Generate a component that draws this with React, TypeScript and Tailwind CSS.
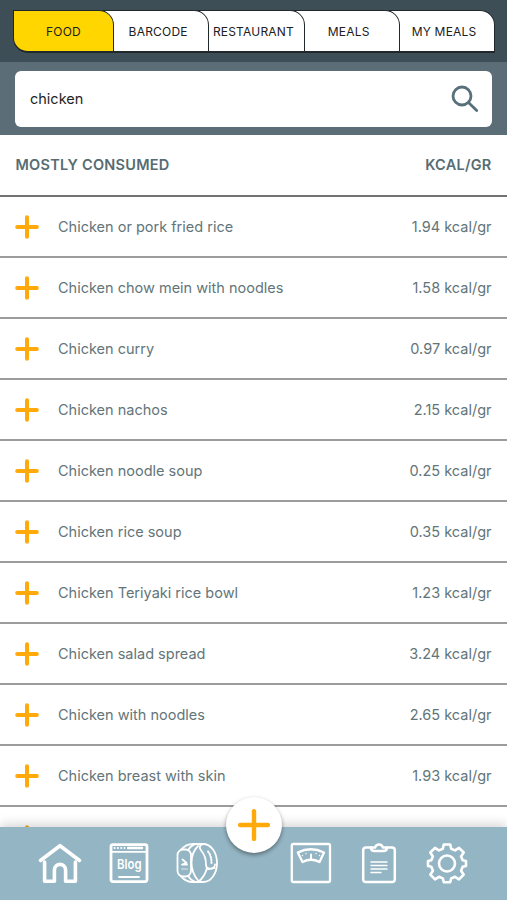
const tabs = ['FOOD', 'BARCODE', 'RESTAURANT', 'MEALS', 'MY MEALS'];

const foods = [
  { name: 'Chicken or pork fried rice', kcal: '1.94' },
  { name: 'Chicken chow mein with noodles', kcal: '1.58' },
  { name: 'Chicken curry', kcal: '0.97' },
  { name: 'Chicken nachos', kcal: '2.15' },
  { name: 'Chicken noodle soup', kcal: '0.25' },
  { name: 'Chicken rice soup', kcal: '0.35' },
  { name: 'Chicken Teriyaki rice bowl', kcal: '1.23' },
  { name: 'Chicken salad spread', kcal: '3.24' },
  { name: 'Chicken with noodles', kcal: '2.65' },
  { name: 'Chicken breast with skin', kcal: '1.93' },
];

function Plus({ className, weight }: { className: string; weight: number }) {
  return (
    <svg viewBox="0 0 24 24" className={className} fill="none" stroke="#ffa90a" strokeWidth={weight} strokeLinecap="round">
      <path d="M12 2.2v19.6M2.2 12h19.6" />
    </svg>
  );
}

function HomeIcon() {
  return (
    <svg viewBox="0 0 44 42" className="h-[42px] w-[44px]" fill="none" stroke="currentColor" strokeWidth="3.6" strokeLinecap="round" strokeLinejoin="round">
      <path d="M2.5 18.5 22 3.7l19.5 14.8" />
      <path d="M6.6 20v19.2h9.8V28a5.6 5.6 0 0 1 11.2 0v11.2h9.8V20" />
    </svg>
  );
}

function BlogIcon() {
  return (
    <svg viewBox="0 0 40 42" className="h-[42px] w-10" fill="none" stroke="currentColor" strokeWidth="2.8" strokeLinecap="round" strokeLinejoin="round">
      <rect x="2" y="2.6" width="36" height="37" rx="2" />
      <path d="M3 9.8h34" strokeWidth="1.8" />
      <path d="M19 6h14" strokeWidth="2.4" />
      <path d="M5.5 6h10" strokeWidth="1.8" strokeDasharray="0.3 3" />
      <path d="M10 35h20" strokeWidth="1.8" />
      <text x="8" y="27" fill="currentColor" stroke="none" fontFamily="Inter, sans-serif" fontSize="13.5" fontWeight="600" textLength="24.5" lengthAdjust="spacingAndGlyphs">
        Blog
      </text>
    </svg>
  );
}

function BandIcon() {
  return (
    <svg viewBox="0 0 42 42" className="h-[42px] w-[42px]" fill="none" stroke="currentColor" strokeWidth="1.8" strokeLinecap="round" strokeLinejoin="round">
      <rect x="1.5" y="7.5" width="13.5" height="27" rx="5.5" />
      <path d="M5 7.7Q10 2 17 2h10c8 0 14 8.5 14 19s-6 19-14 19H17Q10 40 5 34.3" />
      <path d="M12 8q2.500-4 7-5.800M12 34q2.500 4 7 5.800" />
      <path d="M27 2.2c-4 .8-4 4.2-1.500 6.8 3.500 4 4.500 8 4.500 13.500 0 5.500 8.500 5.500 9 0" />
      <path d="M32 9.5c2.500 3 3.500 7 3.500 11.500" strokeWidth="2" strokeDasharray="1 1.800" />
      <path d="M22 4C17 9 15.500 14 15.500 21S18 33.500 22 38.500M31 26C29.500 32 27 36 22.500 39.800" />
      <path d="M30.500 27.500 39 26" strokeWidth="1.300" />
      <path d="M6.500 17.500 10.500 21 6 22.500h5" strokeWidth="1.800" />
      <path d="M5.500 27h6" strokeWidth="1" opacity=".7" />
    </svg>
  );
}

function ScaleIcon() {
  return (
    <svg viewBox="0 0 42 42" className="h-[42px] w-[42px]" fill="none" stroke="currentColor" strokeWidth="2.3" strokeLinecap="round" strokeLinejoin="round">
      <rect x="1.8" y="2" width="38.2" height="38" rx="1.6" />
      <path d="M7.800 10.500q13-6.500 26.200 0l-4.500 9.500q-8.500-4.500-17 0Z" />
      <path d="M21 12.5V17" strokeWidth="2" />
      <path d="M16 11.500v.2M26 11.500v.2M12.500 13.300v.2M29.500 13.300v.2" strokeWidth="1.3" />
    </svg>
  );
}

function ClipboardIcon() {
  return (
    <svg viewBox="0 0 36 42" className="h-[42px] w-9" fill="none" stroke="currentColor" strokeWidth="2.5" strokeLinecap="round" strokeLinejoin="round">
      <path d="M10 5.5H5A2.8 2.8 0 0 0 2.2 8.3v28.9A2.8 2.8 0 0 0 5 40h26a2.8 2.8 0 0 0 2.8-2.8V8.3A2.8 2.8 0 0 0 31 5.5h-5" />
      <path d="M10 5.500h4q1-3 4-3t4 3h4q0 3.500-3.500 3.500h-9Q10 9 10 5.500Z" />
      <path d="M10 20h16M10 23.500h16M10 27h16M10 30.500h10" strokeWidth="1.4" />
    </svg>
  );
}

function GearIcon() {
  return (
    <svg viewBox="0 0 42 42" className="h-[42px] w-[42px]" fill="none" stroke="currentColor" strokeWidth="2.6" strokeLinejoin="round">
      <path d="M17.800 2.500h6.400l1 4.300 3.800 1.600 4-2.600 4.700 4.700-2.600 4 1.600 3.800 3.300.7v5l-3.300.8-1.600 3.900 2.600 4-4.700 4.700-4-2.600-3.800 1.600-1 3.800h-6.400l-1-3.800-3.800-1.600-4 2.600-4.700-4.700 2.600-4-1.600-3.900L2 24v-5l3.300-.7 1.600-3.800-2.600-4L9 5.800l4 2.600 3.800-1.600Z" />
      <circle cx="21" cy="21.5" r="8" />
    </svg>
  );
}

export default function App() {
  return (
    <div className="relative flex h-[900px] w-[507px] flex-col overflow-hidden bg-white font-['Inter',sans-serif] text-[#637579]">
      <header className="h-[62px] shrink-0 bg-[#3d4e56] pt-[10px] pl-[13px]">
        <div className="isolate flex h-[43px]">
          {tabs.map((tab, i) => (
            <button
              key={tab}
              style={{ zIndex: tabs.length - i }}
              className={`relative flex items-center justify-center rounded-tr-[15px] border-[1.5px] border-b-2 border-[#20282b] pt-px text-[12px] tracking-[0.2px] whitespace-nowrap text-[#1c2022] ${
                i === 0 ? 'w-[101px] rounded-bl-[15px] bg-[#ffd600]' : '-ml-4 w-[111.3px] bg-white pl-[9px]'
              }`}
            >
              {tab}
            </button>
          ))}
        </div>
      </header>

      <div className="h-[73px] shrink-0 bg-[#5b6d77] px-[15px] pt-[9px]">
        <div className="flex h-[56px] items-center justify-between rounded-md bg-white pr-[13px] pl-[15px]">
          <span className="text-[14.5px] text-[#1f2426]">chicken</span>
          <svg viewBox="0 0 28 28" className="h-7 w-7" fill="none" stroke="#587079" strokeWidth="2.8" strokeLinecap="round">
            <circle cx="11" cy="11" r="9" />
            <path d="m17.7 17.7 8 7.8" />
          </svg>
        </div>
      </div>

      <div className="flex h-[62px] shrink-0 items-center justify-between border-b-2 border-[#707273] px-[15.5px] text-[14.5px] font-semibold tracking-[0.25px] text-[#566c72]">
        <span>MOSTLY CONSUMED</span>
        <span>KCAL/GR</span>
      </div>

      <ul>
        {foods.map(food => (
          <li key={food.name} className="flex h-[61px] items-center border-b-2 border-[#9b9c9d] pr-[15.5px] pl-[15px] text-[14.5px]">
            <Plus className="h-6 w-6" weight={4} />
            <span className="ml-[19px] flex-1">{food.name}</span>
            <span>{food.kcal} kcal/gr</span>
          </li>
        ))}
        <li className="flex h-[61px] items-start pt-[18px] pl-[15px]">
          <Plus className="h-6 w-6" weight={4} />
        </li>
      </ul>

      <nav className="absolute inset-x-0 bottom-0 flex h-[73px] bg-[#94b5c4] text-white shadow-[0_-3px_10px_rgba(0,0,0,0.16)]">
        <div className="mt-[15px] flex w-full items-start pl-[38px]">
          <HomeIcon />
          <div className="ml-[27px]"><BlogIcon /></div>
          <div className="ml-[27px]"><BandIcon /></div>
          <div className="ml-[72px]"><ScaleIcon /></div>
          <div className="ml-[29px]"><ClipboardIcon /></div>
          <div className="ml-[29px]"><GearIcon /></div>
        </div>
      </nav>
      <button className="absolute bottom-[47px] left-[226px] flex h-14 w-14 items-center justify-center rounded-full bg-white shadow-[0_2px_4px_rgba(0,0,0,0.4)]">
        <Plus className="h-[34px] w-[34px]" weight={3.1} />
      </button>
    </div>
  );
}
